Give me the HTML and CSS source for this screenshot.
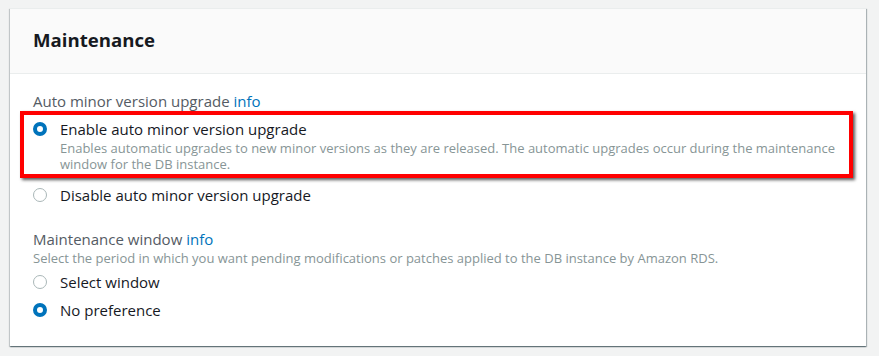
FILE: index.html
```html
<!DOCTYPE html>
<html lang="en">
<head>
<meta charset="utf-8">
<title>Maintenance</title>
<link rel="stylesheet" href="styles.css">
</head>
<body>
<div class="card">
  <div class="card-header"><h2 class="title">Maintenance</h2></div>
  <div class="card-body">
    <div class="field">
      <div class="label">Auto minor version upgrade <a class="info" href="#">info</a></div>
      <div class="highlight">
        <label class="option">
          <span class="radio on"></span>
          <span class="opt-text">
            <span class="opt-label">Enable auto minor version upgrade</span>
            <span class="opt-desc">Enables automatic upgrades to new minor versions as they are released. The automatic upgrades occur during the maintenance<br>window for the DB instance.</span>
          </span>
        </label>
      </div>
      <label class="option spaced">
        <span class="radio"></span>
        <span class="opt-text"><span class="opt-label">Disable auto minor version upgrade</span></span>
      </label>
    </div>
    <div class="field second">
      <div class="label">Maintenance window <a class="info" href="#">info</a></div>
      <div class="field-desc">Select the period in which you want pending modifications or patches applied to the DB instance by Amazon RDS.</div>
      <label class="option spaced6">
        <span class="radio"></span>
        <span class="opt-text"><span class="opt-label">Select window</span></span>
      </label>
      <label class="option spaced8">
        <span class="radio on"></span>
        <span class="opt-text"><span class="opt-label">No preference</span></span>
      </label>
    </div>
  </div>
</div>
</body>
</html>
```

FILE: styles.css
```css
html, body {
  margin: 0;
  padding: 0;
}
body {
  background: #f2f3f3;
  font-family: "Open Sans", "Noto Sans", Arial, sans-serif;
  color: #16191f;
  padding: 8px 13px 10px 10px;
  box-sizing: border-box;
  width: 879px;
  height: 356px;
}
.card {
  width: 856px;
  height: 338px;
  background: #fff;
  box-shadow: 0 1px 1px 0 rgba(0, 28, 36, 0.35), 1px 1px 1px 0 rgba(0, 28, 36, 0.25), -1px 1px 1px 0 rgba(0, 28, 36, 0.15);
  border-top: 1px solid #eaeded;
  box-sizing: border-box;
}
.card-header {
  height: 65px;
  background: #fafafa;
  border-bottom: 1px solid #eaeded;
  box-sizing: border-box;
  padding: 0 23px 2px 23px;
  display: flex;
  align-items: center;
}
.title {
  margin: 0;
  font-size: 18.6px;
  font-weight: 700;
  line-height: 24px;
  color: #16191f;
}
.card-body {
  padding: 17px 23px 0 23px;
}
.label {
  font-size: 15px;
  line-height: 20px;
  color: #545b64;
}
.info {
  color: #0073bb;
  text-decoration: none;
}
.highlight {
  margin: 0 0 0 -13px;
  width: 833px;
  box-sizing: border-box;
  border: 4px solid #f00;
  box-shadow: 2px 2px 3px rgba(0, 0, 0, 0.65);
  padding: 4px 0 2px 9px;
}
.option {
  display: flex;
  align-items: flex-start;
  gap: 13px;
  cursor: pointer;
}
.spaced {
  margin-top: 7px;
}
.spaced6 {
  margin-top: 6px;
}
.spaced8 {
  margin-top: 8px;
}
.radio {
  flex: none;
  width: 14px;
  height: 14px;
  margin-top: 3px;
  border-radius: 50%;
  box-sizing: border-box;
  border: 1.5px solid #aab7b8;
  background: #fff;
}
.radio.on {
  border: 4.5px solid #0073bb;
}
.opt-text {
  display: flex;
  flex-direction: column;
}
.opt-label {
  font-size: 15px;
  line-height: 20px;
  color: #16191f;
}
.opt-desc {
  margin-top: 1px;
  font-size: 13px;
  line-height: 16px;
  color: #879596;
}
.second {
  margin-top: 24px;
}
.field-desc {
  margin-top: 1px;
  font-size: 13px;
  line-height: 16px;
  color: #879596;
}
```
